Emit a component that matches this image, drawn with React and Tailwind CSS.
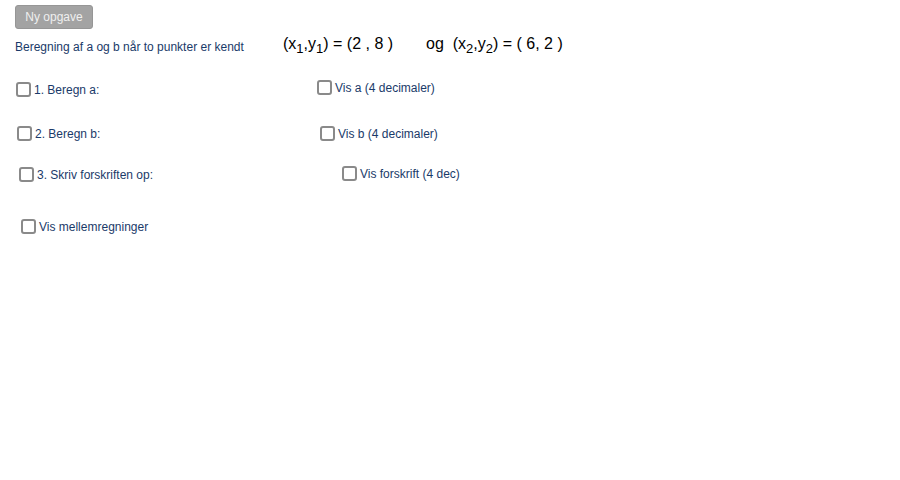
import React, { useState } from "react";

// GeoGebra-style checkbox with a label
const Check = ({ label, className = "" }) => {
  const [on, setOn] = useState(false);
  return (
    <label
      className={
        "flex items-center gap-[3px] text-[12px] text-[#1a3a69] leading-none cursor-pointer " +
        className
      }
    >
      <span
        onClick={() => setOn(!on)}
        className={
          "inline-block w-[15px] h-[15px] rounded-[3px] border-2 " +
          (on ? "bg-[#6557d2] border-[#6557d2]" : "bg-white border-[#8a8a8a]")
        }
      />
      <span>{label}</span>
    </label>
  );
};

const Sub = ({ children }) => (
  <sub className="text-[13px] relative top-[4px]">{children}</sub>
);

export default function App() {
  return (
    <div
      className="w-[900px] h-[480px] bg-white overflow-hidden flex flex-col pt-[5px] pl-[15px]"
      style={{ fontFamily: '"Liberation Sans", Arial, sans-serif' }}
    >
      <button className="w-[78px] h-[24px] rounded-[3px] bg-[#a3a3a3] border border-[#969696] text-[12px] text-[#efefef]">
        Ny opgave
      </button>

      <div className="flex items-start mt-[5px] h-[24px]">
        <div className="w-[268px] text-[12px] text-[#1a3a69] leading-none pt-[7px]">
          Beregning af a og b når to punkter er kendt
        </div>
        <div className="text-[16px] text-black leading-none whitespace-pre pt-[2px]">
          (x<Sub>1</Sub>,y<Sub>1</Sub>) = (2 , 8 )
          <span className="ml-[33px]">
            og&nbsp; (x<Sub>2</Sub>,y<Sub>2</Sub>) = ( 6, 2 )
          </span>
        </div>
      </div>

      <div className="flex items-start mt-[22px]">
        <Check label="1. Beregn a:" className="w-[301px] ml-[1px] mt-[2px]" />
        <Check label="Vis a (4 decimaler)" />
      </div>

      <div className="flex items-start mt-[29px]">
        <Check label="2. Beregn b:" className="w-[303px] ml-[2px]" />
        <Check label="Vis b (4 decimaler)" />
      </div>

      <div className="flex items-start mt-[25px]">
        <Check label="3. Skriv forskriften op:" className="w-[323px] ml-[4px] mt-[1px]" />
        <Check label="Vis forskrift (4 dec)" />
      </div>

      <Check label="Vis mellemregninger" className="ml-[6px] mt-[37px]" />
    </div>
  );
}
